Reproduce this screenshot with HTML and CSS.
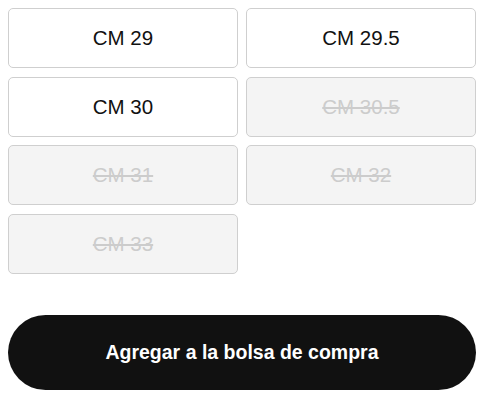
FILE: index.html
```html
<!DOCTYPE html>
<html lang="es">
<head>
<meta charset="utf-8">
<title>Tallas</title>
<link rel="stylesheet" href="styles.css">
</head>
<body>
  <div class="size-picker">
    <div class="sizes">
      <button class="size">CM 29</button>
      <button class="size">CM 29.5</button>
      <button class="size">CM 30</button>
      <button class="size is-out" disabled>CM 30.5</button>
      <button class="size is-out" disabled>CM 31</button>
      <button class="size is-out" disabled>CM 32</button>
      <button class="size is-out" disabled>CM 33</button>
    </div>
    <button class="add-to-bag">Agregar a la bolsa de compra</button>
  </div>
</body>
</html>
```
FILE: styles.css
```css
* { box-sizing: border-box; }

body {
  margin: 8px;
  background: #fff;
  font-family: "Liberation Sans", Arial, sans-serif;
  color: #111;
}

.size-picker {
  display: flex;
  flex-direction: column;
  gap: 41px;
}

.sizes {
  display: grid;
  grid-template-columns: 1fr 1fr;
  column-gap: 8px;
  row-gap: 8.7px;
}

.size {
  height: 60px;
  border: 1px solid #cfcfcf;
  border-radius: 5px;
  background: #fff;
  font-family: inherit;
  font-size: 20.5px;
  color: #111;
  padding: 0;
}

.size.is-out {
  background: #f4f4f4;
  color: #cccccc;
  text-decoration: line-through;
  text-decoration-thickness: 2px;
}

.add-to-bag {
  height: 75px;
  border: none;
  border-radius: 38px;
  background: #111;
  color: #fff;
  font-family: inherit;
  font-size: 19.5px;
  font-weight: 700;
  padding: 0;
}
```
